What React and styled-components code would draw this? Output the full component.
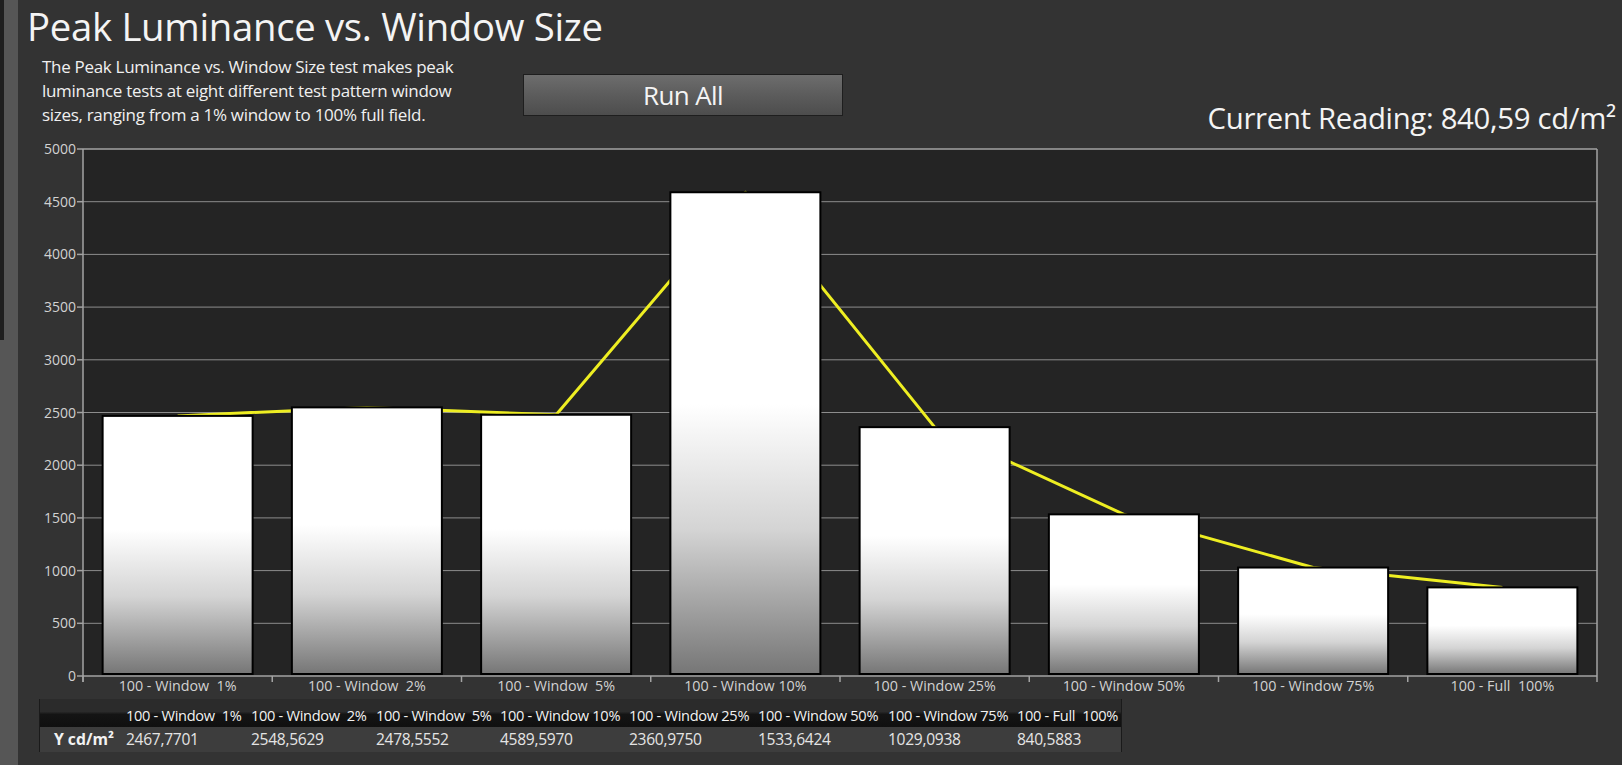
import React from "react";
import styled, { createGlobalStyle } from "styled-components";

const GlobalStyle = createGlobalStyle`
  html, body { margin: 0; padding: 0; background: #333333; }
  body { font-family: "Open Sans", "Noto Sans", sans-serif; color: #f2f2f2; }
  * { box-sizing: border-box; }
`;

const Page = styled.div`
  display: flex;
  width: 1622px;
  height: 765px;
  overflow: hidden;
  background: #333333;
`;

const Rail = styled.div`
  flex: 0 0 18px;
  background: #565656;
  display: flex;
  flex-direction: column;
`;

const RailNotch = styled.div`
  width: 4px;
  height: 340px;
  background: #1f1f1f;
`;

const Main = styled.div`
  flex: 1;
  display: flex;
  flex-direction: column;
`;

const Title = styled.h1`
  margin: 0;
  padding-left: 9px;
  font-family: "Open Sans", sans-serif;
  font-weight: 400;
  font-size: 38.3px;
  line-height: 52px;
  height: 52px;
  color: #f4f4f4;
  letter-spacing: -0.3px;
`;

const Header = styled.div`
  display: flex;
  height: 88px;
`;

const Description = styled.p`
  margin: 0 0 0 24px;
  padding-top: 3px;
  width: 450px;
  font-size: 17px;
  line-height: 24px;
  color: #f0f0f0;
  letter-spacing: -0.3px;
`;

const RunButton = styled.button`
  margin: 22px 0 0 31px;
  width: 320px;
  height: 42px;
  border: 1px solid #1e1e1e;
  background: linear-gradient(to bottom, #6d6d6d 0%, #5c5c5c 50%, #4d4d4d 100%);
  color: #f4f4f4;
  font-family: "Open Sans", sans-serif;
  font-size: 26px;
  letter-spacing: -0.6px;
  padding: 0;
  line-height: 40px;
  cursor: pointer;
`;

const Reading = styled.div`
  margin-left: auto;
  margin-right: 6px;
  align-self: flex-end;
  margin-bottom: 4px;
  font-size: 29.3px;
  line-height: 36px;
  color: #f4f4f4;
  letter-spacing: -0.3px;
`;

const ChartSvg = styled.svg`
  display: block;
  flex: 0 0 auto;
`;

const GridLine = styled.line`
  stroke: #8d8d8d;
  stroke-width: 1;
`;

const FrameLine = styled.line`
  stroke: #a3a3a3;
  stroke-width: 1.5;
`;

const AxisText = styled.text`
  font-family: "Open Sans", sans-serif;
  font-size: ${(p) => p.$size || 13.8}px;
  fill: #d2d2d2;
  white-space: pre;
`;

const TrendLine = styled.polyline`
  fill: none;
  stroke: #eeee22;
  stroke-width: 3;
  stroke-linejoin: round;
`;

const Bar = styled.rect`
  fill: url(#barGrad);
  stroke: #000;
  stroke-width: 2;
`;

const DataTable = styled.div`
  margin: 1px 0 0 21px;
  width: 1083px;
  display: grid;
  grid-template-columns: 86px 125px 125px 124px 129px 129px 130px 129px 1fr;
  border-left: 1px solid #1a1a1a;
  border-right: 1px solid #1a1a1a;
`;

const HeadCell = styled.div`
  height: 28px;
  padding: 6px 0 0 0;
  background: linear-gradient(to bottom, #2b2b2b 0%, #2b2b2b 45%, #141414 55%, #101010 100%);
  font-size: 14.6px;
  line-height: 20px;
  color: #f2f2f2;
  white-space: pre;
  letter-spacing: -0.3px;
`;

const RowLabel = styled.div`
  height: 25px;
  background: #3d3d3d;
  font-weight: 700;
  font-size: 15.8px;
  line-height: 25px;
  text-align: right;
  padding-right: 12px;
  color: #f2f2f2;
`;

const Cell = styled.div`
  height: 25px;
  background: #3d3d3d;
  font-size: 15.6px;
  line-height: 25px;
  color: #e4e4e4;
  letter-spacing: -0.3px;
`;

const DATA = [
  { label: "100 - Window  1%", v: 2467.7701 },
  { label: "100 - Window  2%", v: 2548.5629 },
  { label: "100 - Window  5%", v: 2478.5552 },
  { label: "100 - Window 10%", v: 4589.597 },
  { label: "100 - Window 25%", v: 2360.975 },
  { label: "100 - Window 50%", v: 1533.6424 },
  { label: "100 - Window 75%", v: 1029.0938 },
  { label: "100 - Full  100%", v: 840.5883 },
];

const fmt = (v) => v.toFixed(4).replace(".", ",");

const X0 = 83;
const X1 = 1597;
const Y0 = 149;
const Y1 = 676;
const CW = (X1 - X0) / 8;
const yOf = (v) => Y1 - (v / 5000) * (Y1 - Y0);
const TICKS = [0, 500, 1000, 1500, 2000, 2500, 3000, 3500, 4000, 4500, 5000];

function Chart() {
  const centers = DATA.map((_, i) => X0 + CW * (i + 0.5));
  const pts = DATA.map((d, i) => `${centers[i]},${yOf(d.v)}`).join(" ");
  return (
    <ChartSvg width={1604} height={558} viewBox="18 140 1604 558">
      <defs>
        <linearGradient id="barGrad" x1="0" y1="0" x2="0" y2="1">
          <stop offset="0" stopColor="#ffffff" />
          <stop offset="0.44" stopColor="#ffffff" />
          <stop offset="0.7" stopColor="#d4d4d4" />
          <stop offset="1" stopColor="#767676" />
        </linearGradient>
      </defs>
      <rect x={X0} y={Y0} width={X1 - X0} height={Y1 - Y0} fill="#242424" />
      {TICKS.slice(1, -1).map((t) => (
        <GridLine key={t} x1={X0} x2={X1} y1={yOf(t)} y2={yOf(t)} />
      ))}
      <FrameLine x1={X0} x2={X1} y1={Y0} y2={Y0} />
      <FrameLine x1={X1} x2={X1} y1={Y0} y2={Y1 + 6} />
      <FrameLine x1={X0} x2={X0} y1={Y0} y2={Y1 + 6} />
      <FrameLine x1={X0} x2={X1} y1={Y1} y2={Y1} />
      {TICKS.map((t) => (
        <g key={t}>
          <FrameLine x1={X0 - 6} x2={X0} y1={yOf(t)} y2={yOf(t)} />
          <AxisText x={X0 - 7} y={yOf(t) + 5} textAnchor="end" $size={14}>
            {t}
          </AxisText>
        </g>
      ))}
      {DATA.map((_, i) => (
        <FrameLine key={i} x1={X0 + CW * i} x2={X0 + CW * i} y1={Y1} y2={Y1 + 6} />
      ))}
      <TrendLine points={pts} />
      {DATA.map((d, i) => (
        <Bar key={d.label} x={centers[i] - 75} y={yOf(d.v)} width={150} height={Y1 - 2 - yOf(d.v)} />
      ))}
      {DATA.map((d, i) => (
        <AxisText key={d.label} x={centers[i]} y={Y1 + 15} textAnchor="middle" $size={14.3}>
          {d.label}
        </AxisText>
      ))}
    </ChartSvg>
  );
}

export default function App() {
  return (
    <>
      <GlobalStyle />
      <Page>
        <Rail>
          <RailNotch />
        </Rail>
        <Main>
          <Title>Peak Luminance vs. Window Size</Title>
          <Header>
            <Description>
              The Peak Luminance vs. Window Size test makes peak luminance tests at eight different test
              pattern window sizes, ranging from a 1% window to 100% full field.
            </Description>
            <RunButton>Run All</RunButton>
            <Reading>Current Reading: 840,59 cd/m²</Reading>
          </Header>
          <Chart />
          <DataTable>
            <HeadCell />
            {DATA.map((d) => (
              <HeadCell key={d.label}>{d.label}</HeadCell>
            ))}
            <RowLabel>Y cd/m²</RowLabel>
            {DATA.map((d) => (
              <Cell key={d.label}>{fmt(d.v)}</Cell>
            ))}
          </DataTable>
        </Main>
      </Page>
    </>
  );
}
